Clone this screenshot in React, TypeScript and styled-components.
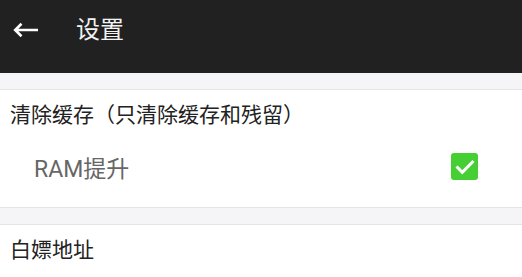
import React, { useState } from "react";
import styled, { createGlobalStyle } from "styled-components";

const GlobalStyle = createGlobalStyle`
  html, body {
    margin: 0;
    padding: 0;
    background: #ffffff;
    font-family: Roboto, "Noto Sans CJK SC", sans-serif;
  }
`;

const Page = styled.div`
  width: 522px;
  height: 277px;
  overflow: hidden;
  display: flex;
  flex-direction: column;
  background: #ffffff;
`;

const Header = styled.div`
  height: 73px;
  flex-shrink: 0;
  background: #212121;
  display: flex;
  align-items: flex-start;
`;

const HeaderBar = styled.div`
  height: 60px;
  display: flex;
  align-items: center;
  padding-left: 13px;
`;

const BackButton = styled.button`
  background: none;
  border: none;
  padding: 0;
  width: 26px;
  height: 16px;
  display: flex;
  align-items: center;
  cursor: pointer;
`;

const Title = styled.div`
  margin-left: 37px;
  color: #f2f2f2;
  font-size: 24px;
  line-height: 1;
`;

const Separator = styled.div<{ $top?: boolean }>`
  height: 16px;
  flex-shrink: 0;
  background: #f5f5f7;
  border-top: ${(p) => (p.$top ? "1px solid #e3e3ea" : "none")};
  border-bottom: 1px solid #e3e3ea;
`;

const Section = styled.div<{ $bottom?: number }>`
  display: flex;
  flex-direction: column;
  padding-bottom: ${(p) => p.$bottom ?? 0}px;
`;

const SectionTitle = styled.div`
  height: 46px;
  display: flex;
  align-items: center;
  padding-left: 10px;
  color: #222222;
  font-size: 21px;
`;

const ItemRow = styled.div`
  height: 61px;
  display: flex;
  align-items: center;
  justify-content: space-between;
  padding-left: 34px;
  padding-right: 44px;
`;

const ItemLabel = styled.div`
  color: #666666;
  font-size: 23px;
`;

const CheckBox = styled.button<{ $checked: boolean }>`
  width: 27px;
  height: 27px;
  padding: 0;
  border: none;
  border-radius: 3px;
  background: ${(p) => (p.$checked ? "#46cf33" : "#dddddd")};
  display: flex;
  align-items: center;
  justify-content: center;
  cursor: pointer;
`;

const App: React.FC = () => {
  const [ramBoost, setRamBoost] = useState(true);

  return (
    <>
      <GlobalStyle />
      <Page>
        <Header>
          <HeaderBar>
            <BackButton>
              <svg width="26" height="16" viewBox="0 0 26 16">
                <path
                  d="M25 8H2.5M8.5 1.8L2.2 8l6.3 6.2"
                  fill="none"
                  stroke="#ffffff"
                  strokeWidth="2.6"
                />
              </svg>
            </BackButton>
            <Title>设置</Title>
          </HeaderBar>
        </Header>
        <Separator />
        <Section $bottom={10}>
          <SectionTitle>清除缓存（只清除缓存和残留）</SectionTitle>
          <ItemRow>
            <ItemLabel>RAM提升</ItemLabel>
            <CheckBox $checked={ramBoost} onClick={() => setRamBoost(!ramBoost)}>
              {ramBoost && (
                <svg width="22" height="17" viewBox="0 0 22 17">
                  <path
                    d="M2.5 8.5l5.8 5.8L19.5 3"
                    fill="none"
                    stroke="#ffffff"
                    strokeWidth="3"
                  />
                </svg>
              )}
            </CheckBox>
          </ItemRow>
        </Section>
        <Separator $top />
        <Section>
          <SectionTitle>白嫖地址</SectionTitle>
        </Section>
      </Page>
    </>
  );
};

export default App;
